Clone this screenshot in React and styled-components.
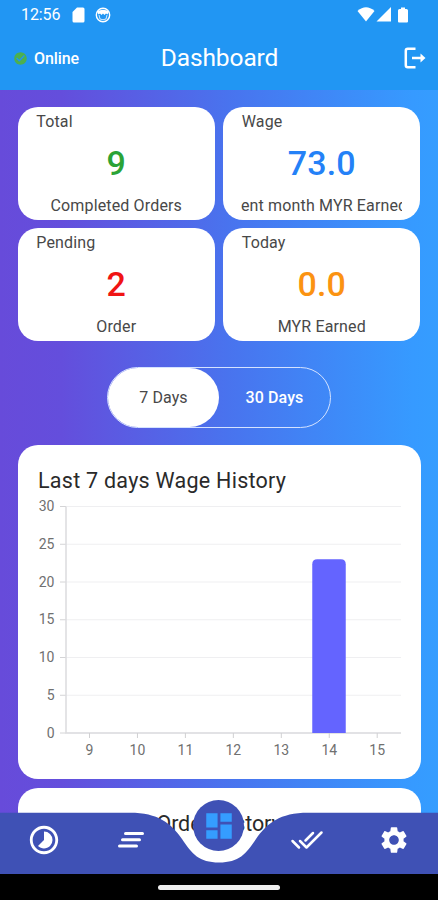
import React from "react";
import styled, { createGlobalStyle } from "styled-components";
import { MdTimelapse, MdSettings, MdDashboard, MdCheckCircle } from "react-icons/md";

const GlobalStyle = createGlobalStyle`
  *, *::before, *::after { box-sizing: border-box; }
  body { margin: 0; font-family: Roboto, "Liberation Sans", sans-serif; }
`;

const Phone = styled.div`
  position: relative;
  display: flex;
  flex-direction: column;
  width: 438px;
  height: 900px;
  overflow: hidden;
  background: linear-gradient(90deg, #674bda 0%, #644edc 14%, #4973ee 52%, #369aff 94%, #359dff 100%);
`;

const Header = styled.header`
  flex: none;
  height: 90px;
  background: #2196f3;
  color: #fff;
`;

const StatusBar = styled.div`
  display: flex;
  align-items: center;
  justify-content: space-between;
  height: 29px;
  padding: 0 30px 0 21px;
`;

const StatusGroup = styled.div`
  display: flex;
  align-items: center;
  gap: ${(p) => p.$gap}px;
`;

const Clock = styled.span`
  font-size: 16px;
  line-height: 20px;
  letter-spacing: -0.1px;
  margin-right: 2px;
`;

const AppBar = styled.div`
  display: grid;
  grid-template-columns: 1fr auto 1fr;
  align-items: center;
  height: 58px;
  padding: 0 12px 0 13px;
`;

const Presence = styled.div`
  display: flex;
  align-items: center;
  gap: 6px;
  font-size: 16px;
  font-weight: 500;
  letter-spacing: -0.1px;
  svg { color: #4caf50; }
`;

const Title = styled.h1`
  margin: 0;
  font-size: 24.5px;
  line-height: 28px;
  font-weight: 400;
  letter-spacing: -0.1px;
`;

const LogoutButton = styled.button`
  justify-self: end;
  display: flex;
  padding: 0;
  border: 0;
  background: none;
  color: #fff;
`;

const Content = styled.main`
  display: flex;
  flex-direction: column;
  align-items: center;
  padding: 17.4px 17.5px 0;
`;

const StatGrid = styled.section`
  display: grid;
  grid-template-columns: 197px 197px;
  grid-auto-rows: 112.5px;
  gap: 8.5px 8.5px;
`;

const Card = styled.article`
  background: #fff;
  border-radius: 20px;
`;

const StatCard = styled(Card)`
  display: flex;
  flex-direction: column;
  align-items: center;
  padding: 5px 18px;
  color: #484848;
  font-size: 16px;
  line-height: 19px;
  letter-spacing: 0.15px;
`;

const StatLabel = styled.div`
  align-self: flex-start;
  padding-left: 0.5px;
`;

const StatValue = styled.div`
  margin-top: 11.5px;
  height: 40px;
  font-size: 34px;
  line-height: 40px;
  font-weight: 500;
  color: ${(p) => p.$color};
`;

const StatCaption = styled.div`
  display: flex;
  justify-content: ${(p) => (p.$scrolled ? "flex-end" : "center")};
  width: 161px;
  margin-top: 13px;
  overflow: hidden;
  white-space: nowrap;
  span { margin-right: ${(p) => (p.$scrolled ? "-5px" : "0")}; }
`;

const Toggle = styled.div`
  display: flex;
  width: 224px;
  height: 61px;
  margin-top: 26px;
  border: 1.5px solid #d5e3ff;
  border-radius: 31px;
`;

const ToggleOption = styled.button`
  flex: 1;
  padding: 0;
  border: 0;
  border-radius: 30px;
  background: ${(p) => (p.$active ? "#fff" : "transparent")};
  color: ${(p) => (p.$active ? "#484848" : "#fff")};
  font: ${(p) => (p.$active ? 400 : 500)} 16px Roboto, sans-serif;
  letter-spacing: 0.1px;
`;

const ChartCard = styled(Card)`
  width: 403px;
  height: 334.5px;
  margin-top: 17px;
  padding-top: 22px;
`;

const CardTitle = styled.h2`
  margin: 0;
  padding-left: ${(p) => (p.$inset ? "20.5px" : "0")};
  font-size: 21.5px;
  line-height: 28px;
  font-weight: 400;
  letter-spacing: ${(p) => (p.$inset ? "0.26px" : "-0.1px")};
  color: #2a2a2a;
`;

const Chart = styled.svg`
  display: block;
  width: 403px;
  height: 275px;
  font: 400 14px Roboto, sans-serif;
  fill: #707070;
`;

const HistoryCard = styled(Card)`
  width: 403px;
  height: 160px;
  margin-top: 8.5px;
  padding-top: 22px;
  text-align: center;
`;

const Bottom = styled.footer`
  position: absolute;
  left: 0;
  bottom: 0;
  width: 438px;
`;

const NavBar = styled.nav`
  position: relative;
  height: 62px;
`;

const NavShape = styled.svg`
  position: absolute;
  inset: 0;
  fill: #3f51b5;
`;

const NavItems = styled.div`
  position: relative;
  display: grid;
  grid-template-columns: repeat(5, 87.6px);
  height: 56px;
`;

const NavButton = styled.button`
  display: flex;
  align-items: center;
  justify-content: center;
  padding: 0;
  border: 0;
  background: none;
  color: #fff;
`;

const StrokeIcon = styled.svg`
  fill: none;
  stroke: currentColor;
  stroke-width: ${(p) => p.$weight};
  stroke-linecap: round;
  stroke-linejoin: round;
`;

const Fab = styled.button`
  display: flex;
  align-items: center;
  justify-content: center;
  justify-self: center;
  width: 51px;
  height: 51px;
  margin-top: -12px;
  padding: 0;
  border: 0;
  border-radius: 50%;
  background: #3f51b5;
  color: #359dff;
`;

const GestureBar = styled.div`
  display: flex;
  justify-content: center;
  height: 26px;
  padding-top: 11px;
  background: #000;
`;

const GestureHandle = styled.div`
  width: 122px;
  height: 5px;
  border-radius: 3px;
  background: #eee;
`;

const stats = [
  { label: "Total", value: "9", caption: "Completed Orders", color: "#2ba336" },
  { label: "Wage", value: "73.0", caption: "Current month MYR Earned", color: "#2481f7", scrolled: true },
  { label: "Pending", value: "2", caption: "Order", color: "#f01414" },
  { label: "Today", value: "0.0", caption: "MYR Earned", color: "#fb9312" },
];

const wages = [
  { day: 9, amount: 0 },
  { day: 10, amount: 0 },
  { day: 11, amount: 0 },
  { day: 12, amount: 0 },
  { day: 13, amount: 0 },
  { day: 14, amount: 23 },
  { day: 15, amount: 0 },
];

const levels = [0, 5, 10, 15, 20, 25, 30];
const AXIS_X = 48;
const BASE_Y = 238;
const UNIT = 7.55;
const STEP = 47.95;

function WageChart() {
  return (
    <Chart viewBox="0 0 403 275">
      {levels.map((v) => {
        const y = BASE_Y - v * UNIT;
        return (
          <g key={v}>
            <path d={`M${AXIS_X} ${y}H383`} stroke="#efeff1" />
            <path d={`M42 ${y}H${AXIS_X}`} stroke="#d4d4d6" />
            <text x="36.500" y={y + 4.6} textAnchor="end">{v}</text>
          </g>
        );
      })}
      <path d={`M${AXIS_X} 11.500V${BASE_Y}H383`} fill="none" stroke="#dcdcde" strokeWidth="1.5" />
      {wages.map(({ day, amount }, i) => {
        const x = 71.5 + i * STEP;
        const top = BASE_Y - amount * UNIT;
        return (
          <g key={day}>
            <path d={`M${x} ${BASE_Y}v5`} stroke="#d0d0d2" />
            <text x={x} y="260" textAnchor="middle">{day}</text>
            {amount > 0 && (
              <path
                d={`M${x - 17} ${BASE_Y}V${top + 5}q0-5 5-5h23.5q5 0 5 5V${BASE_Y}z`}
                fill="#6464ff"
              />
            )}
          </g>
        );
      })}
    </Chart>
  );
}

export default function App() {
  return (
    <>
      <GlobalStyle />
      <Phone>
        <Header>
          <StatusBar>
            <StatusGroup $gap={10}>
              <Clock>12:56</Clock>
              <svg width="13" height="16" viewBox="0 0 13 16">
                <path d="M5 .5h6q1.500 0 1.500 1.500v12q0 1.500-1.500 1.500H2q-1.500 0-1.500-1.500V5z" fill="#fff" />
              </svg>
              <svg width="16" height="16" viewBox="0 0 16 16">
                <circle cx="8" cy="8" r="6.700" fill="none" stroke="#fff" strokeWidth="1.4" />
                <path d="M2 4.500Q8 1 14 4.500L12.500 7.500 11 6.500 9.500 8 8 6.500 6.500 8 5 6.500 3.500 7.500z" fill="#fff" />
                <path d="M4 8l1 4q3 1.500 6 0l1-4" fill="none" stroke="#fff" strokeWidth=".8" />
              </svg>
            </StatusGroup>
            <StatusGroup $gap={1}>
              <svg width="18" height="15" viewBox="0 0 18 15"><path d="M.5 4Q9-3.500 17.500 4L9 14.500z" fill="#fff" /></svg>
              <svg width="21" height="15" viewBox="0 0 21 15"><path d="M15 0v14.500H.5z" fill="#fff" /></svg>
              <svg width="10" height="16" viewBox="0 0 10 16"><path d="M3 .5h4V2h1.500Q10 2 10 3.500v11q0 1-1 1H1q-1 0-1-1v-11Q0 2 1.500 2H3z" fill="#fff" /></svg>
            </StatusGroup>
          </StatusBar>
          <AppBar>
            <Presence>
              <MdCheckCircle size={15} />
              Online
            </Presence>
            <Title>Dashboard</Title>
            <LogoutButton aria-label="Log out">
              <svg width="22" height="22" viewBox="0 0 22 22" fill="none" stroke="#fff" strokeWidth="2.5">
                <path d="M11.500 1.800H3.800Q1.800 1.800 1.800 3.800v14.400q0 2 2 2H11.500" />
                <path d="M8 11h9" />
                <path d="M16.500 6.500l5 4.500-5 4.500z" fill="#fff" stroke="none" />
              </svg>
            </LogoutButton>
          </AppBar>
        </Header>

        <Content>
          <StatGrid>
            {stats.map((s) => (
              <StatCard key={s.label}>
                <StatLabel>{s.label}</StatLabel>
                <StatValue $color={s.color}>{s.value}</StatValue>
                <StatCaption $scrolled={s.scrolled}><span>{s.caption}</span></StatCaption>
              </StatCard>
            ))}
          </StatGrid>

          <Toggle>
            <ToggleOption $active>7 Days</ToggleOption>
            <ToggleOption>30 Days</ToggleOption>
          </Toggle>

          <ChartCard>
            <CardTitle $inset>Last 7 days Wage History</CardTitle>
            <WageChart />
          </ChartCard>

          <HistoryCard>
            <CardTitle>Order History</CardTitle>
          </HistoryCard>
        </Content>

        <Bottom>
          <NavBar>
            <NavShape width="438" height="62" viewBox="0 0 438 62">
              <path d="M0 .7H130C158 .7 171 11 182 27C192 42 199 50.500 219 50.500C239 50.500 246 42 256 27C267 11 280 .7 308 .7H438V62H0z" />
            </NavShape>
            <NavItems>
              <NavButton aria-label="History"><MdTimelapse size={34} /></NavButton>
              <NavButton aria-label="Orders">
                <StrokeIcon width="28" height="18" viewBox="0 0 28 18" $weight={3}>
                  <path d="M8.500 2.500H25.500M5.500 8.800H22.500M2.500 15H19.500" />
                </StrokeIcon>
              </NavButton>
              <Fab aria-label="Dashboard"><MdDashboard size={34} /></Fab>
              <NavButton aria-label="Completed">
                <StrokeIcon width="34" height="20" viewBox="0 0 34 20" $weight={2.5}>
                  <path d="M2.500 11L9 17.500M10 11L16.500 17.500L31.500 2.500M15.500 10.500L23 3" />
                </StrokeIcon>
              </NavButton>
              <NavButton aria-label="Settings"><MdSettings size={32} /></NavButton>
            </NavItems>
          </NavBar>
          <GestureBar><GestureHandle /></GestureBar>
        </Bottom>
      </Phone>
    </>
  );
}
